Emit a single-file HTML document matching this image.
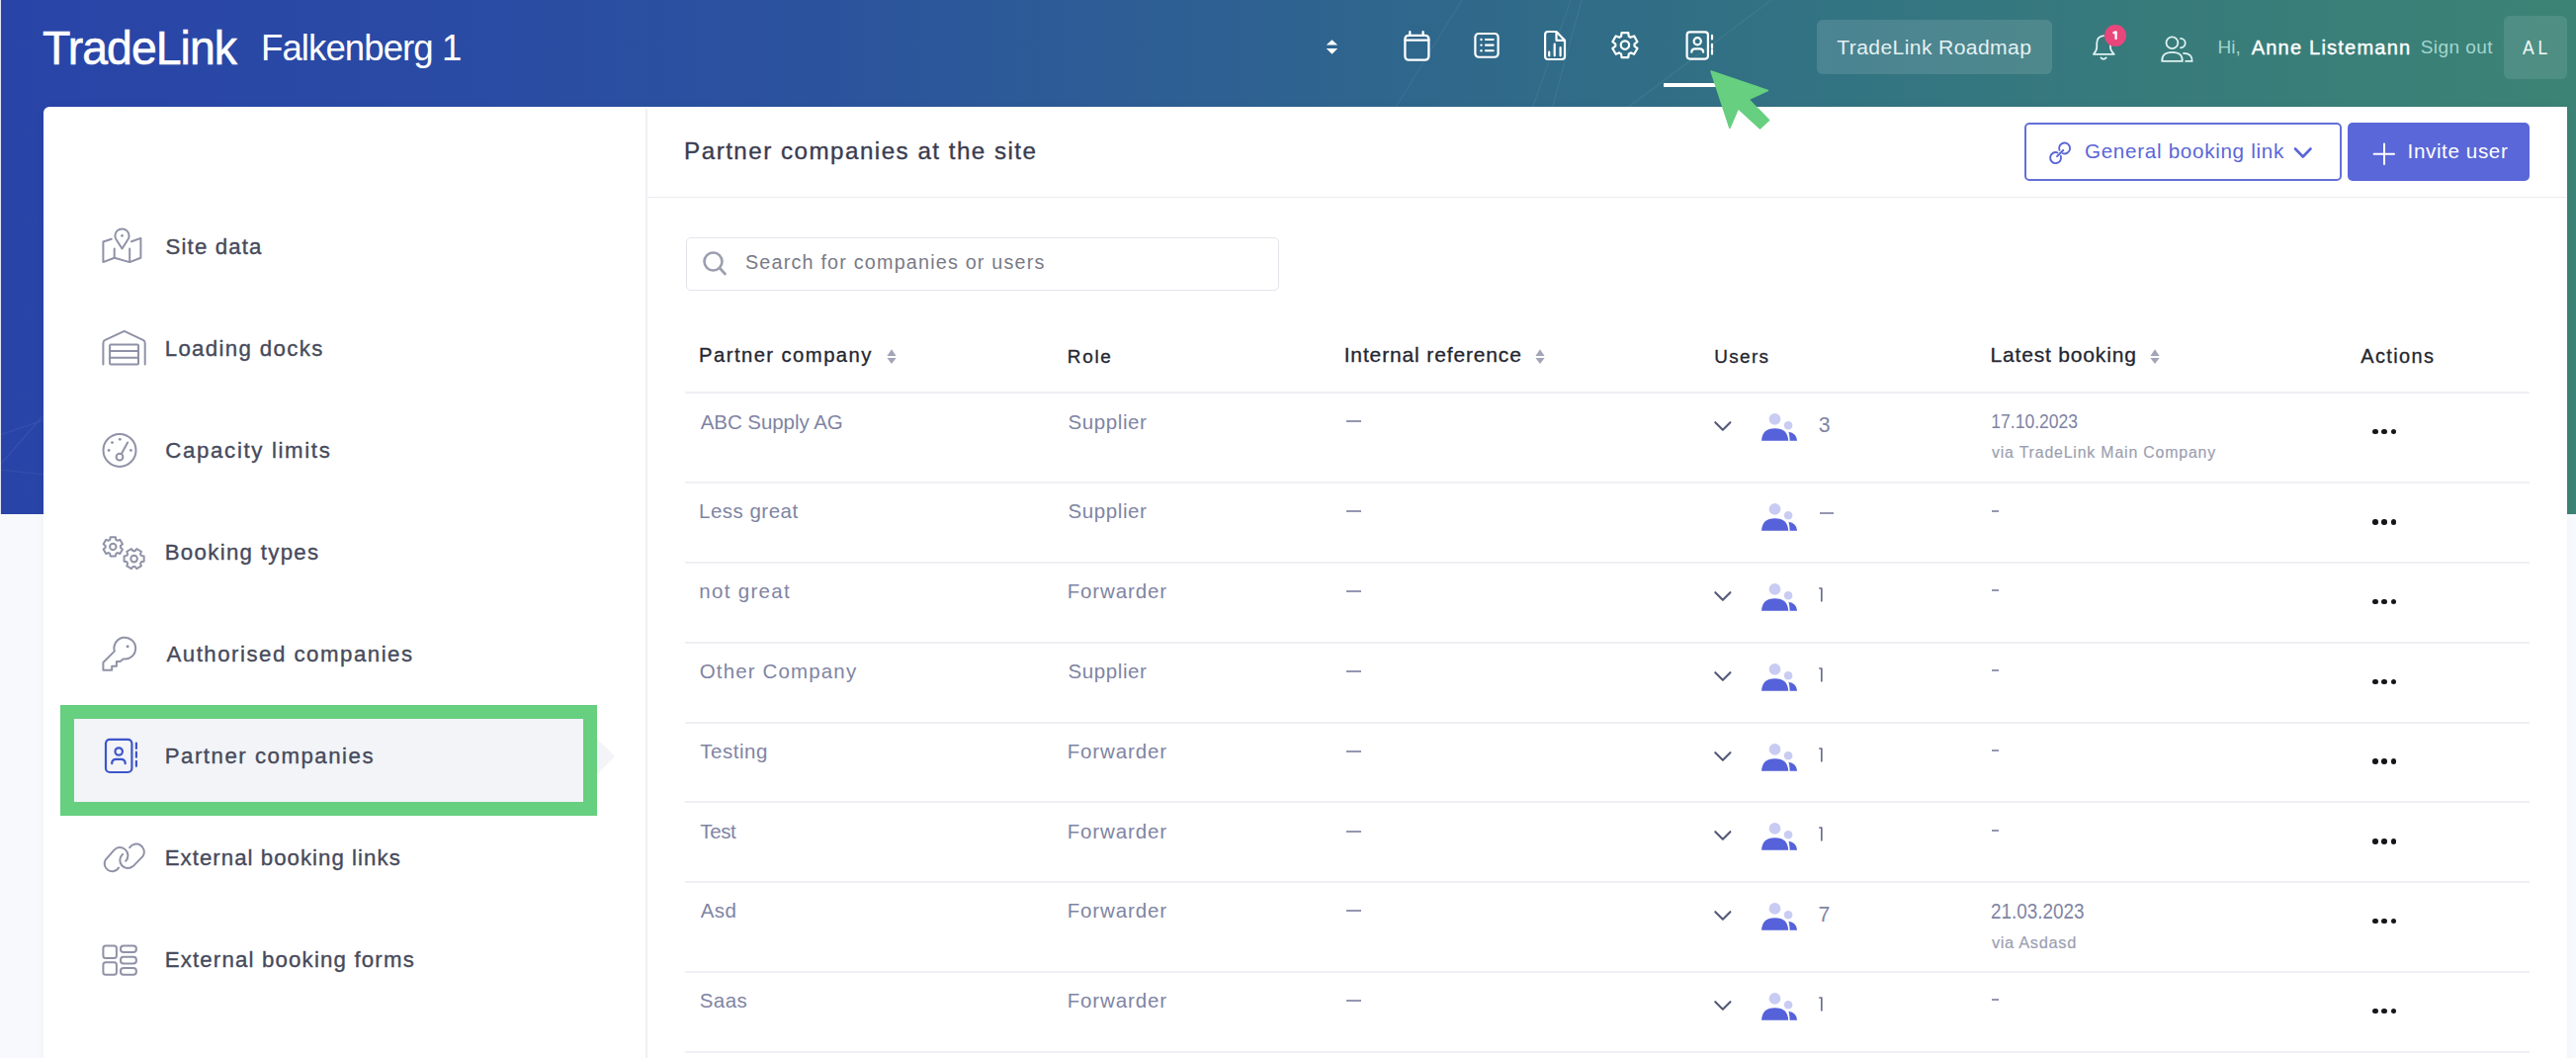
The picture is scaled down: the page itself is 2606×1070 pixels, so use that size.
<!DOCTYPE html>
<html><head><meta charset="utf-8"><style>*{margin:0;padding:0;box-sizing:border-box}
html,body{width:2606px;height:1070px;overflow:hidden;background:#f8f9fd;font-family:"Liberation Sans",sans-serif}
.a{position:absolute;white-space:nowrap;line-height:1}
svg{overflow:visible}
</style></head><body>
<div style="position:absolute;left:0px;top:0px;width:2606px;height:520px;background:linear-gradient(90deg,#2944a8 0%,#2a4ba4 18%,#2b539d 32%,#2e6192 48%,#306b88 60%,#337482 72%,#387b7b 84%,#3c8375 100%);"></div>
<div style="position:absolute;left:0px;top:0px;width:1px;height:520px;background:#dfe4f0;"></div>
<svg style="position:absolute;left:0px;top:0px;" width="2606" height="520" viewBox="0 0 2606 520" fill="none"><g stroke="#ffffff" stroke-width="1.2" opacity="0.06"><path d="M1479 0 L1411 110"/><path d="M1589 0 L1550 110"/><path d="M1600 0 L1570 110"/><path d="M1792 0 L1645 110"/><path d="M0 470 L44 420"/><path d="M0 440 L44 425"/><path d="M0 475 L44 480"/></g></svg>
<div class="a" style="left:42.9px;top:24.25px;font-size:48.84px;letter-spacing:-1.0px;color:#fff;-webkit-text-stroke:0.6px #fff;transform:scaleX(0.95);transform-origin:1.1px 0">TradeLink</div>
<div class="a" style="left:264.00px;top:30.59px;font-size:36.63px;letter-spacing:-0.946px;color:#ffffff;">Falkenberg 1</div>
<svg style="position:absolute;left:1335px;top:35px;" width="25" height="25" viewBox="0 0 25 25" fill="none"><path d="M6.8 10.6 L12.5 5.3 L18.2 10.6Z M6.8 14 L12.5 19.8 L18.2 14Z" fill="#fff"/></svg>
<svg style="position:absolute;left:1410px;top:25px;" width="45" height="45" viewBox="0 0 45 45" fill="none"><g stroke="#fff" stroke-width="2.3" stroke-linecap="round" stroke-linejoin="round"><rect x="11.4" y="10.9" width="24" height="24.7" rx="3.5"/><path d="M11.4 15.6 H35.4 M16.3 7.2 V10.9 M29.6 7.2 V10.9"/></g></svg>
<svg style="position:absolute;left:1485px;top:25px;" width="40" height="40" viewBox="0 0 40 40" fill="none"><g stroke="#fff" stroke-width="2.2" stroke-linecap="round"><rect x="7.4" y="9" width="23.2" height="23.75" rx="3.5"/><path d="M17.9 15 H25.7 M17.9 20.6 H25.7 M17.9 26.3 H25.7" stroke-width="2.1"/></g><g fill="#fff"><circle cx="13.5" cy="15" r="1.2"/><circle cx="13.5" cy="20.6" r="1.2"/><circle cx="13.5" cy="26.3" r="1.2"/></g></svg>
<svg style="position:absolute;left:1555px;top:25px;" width="40" height="40" viewBox="0 0 40 40" fill="none"><g stroke="#fff" stroke-width="2.2" stroke-linecap="round" stroke-linejoin="round"><path d="M19.5 7 H11 Q8.1 7 8.1 10 V32 Q8.1 35 11 35 H25 Q28 35 28 32 V15.8 Z M19.5 7 V15.8 H28"/><path d="M12.2 27.5 V31.3 M17.7 19.5 V31.3 M23.6 23.2 V31.3"/></g></svg>
<svg style="position:absolute;left:1615px;top:25px;" width="60" height="45" viewBox="0 0 60 45" fill="none"><g stroke="#fff" stroke-width="2.2" stroke-linejoin="round"><path d="M32.80 11.83 L32.26 8.04 L25.54 8.04 L25.00 11.83 L24.54 12.05 L24.10 12.29 L23.67 12.55 L23.26 12.83 L19.71 11.41 L16.34 17.24 L19.35 19.60 L19.31 20.10 L19.30 20.60 L19.31 21.10 L19.35 21.60 L16.34 23.96 L19.71 29.79 L23.26 28.37 L23.67 28.65 L24.10 28.91 L24.54 29.15 L25.00 29.37 L25.54 33.16 L32.26 33.16 L32.80 29.37 L33.26 29.15 L33.70 28.91 L34.13 28.65 L34.54 28.37 L38.09 29.79 L41.46 23.96 L38.45 21.60 L38.49 21.10 L38.50 20.60 L38.49 20.10 L38.45 19.60 L41.46 17.24 L38.09 11.41 L34.54 12.83 L34.13 12.55 L33.70 12.29 L33.26 12.05Z"/><circle cx="28.9" cy="20.6" r="4.2"/></g></svg>
<svg style="position:absolute;left:1695px;top:25px;" width="40" height="40" viewBox="0 0 40 40" fill="none"><g stroke="#fff" stroke-width="2.2" stroke-linecap="round"><rect x="11.6" y="7.4" width="21.3" height="27.2" rx="3"/><circle cx="22.2" cy="16.8" r="3.6"/><path d="M16.3 27.7 Q16.3 24.3 19.8 24.3 H24.6 Q28.1 24.3 28.1 27.7"/><path d="M37 10.8 V14.4 M37 19.8 V23.8 M37 25.8 V29.6"/></g></svg>
<div style="position:absolute;left:1683px;top:84px;width:72px;height:4px;background:#fff;"></div>
<div style="position:absolute;left:1838px;top:20px;width:238px;height:55px;background:rgba(255,255,255,0.12);border-radius:6px"></div>
<div class="a" style="left:1858.23px;top:37.26px;font-size:21.08px;letter-spacing:0.406px;color:#e4f1f2;">TradeLink Roadmap</div>
<svg style="position:absolute;left:2105px;top:20px;" width="40" height="45" viewBox="0 0 40 45" fill="none"><g stroke="#dff2f2" stroke-width="1.8" stroke-linecap="round" stroke-linejoin="round"><path d="M23 16.2 Q16.2 17 16.2 24 V28 Q16.2 31 12.9 34.8 H33.8 Q30 31 30 28 V24"/><path d="M20.4 38.4 Q23 41.2 25.7 38.4"/></g></svg>
<div style="position:absolute;left:2128.6px;top:25px;width:22.4px;height:22.4px;border-radius:50%;background:#e9467b"></div>
<svg style="position:absolute;left:2128px;top:25px;" width="24" height="24" viewBox="0 0 24 24" fill="none"><path d="M10.4 8.2 L12.6 7.4 V14.1" stroke="#fff" stroke-width="2.3" stroke-linecap="round" stroke-linejoin="round" fill="none"/></svg>
<svg style="position:absolute;left:2105px;top:20px;" width="130" height="50" viewBox="0 0 130 50" fill="none"><g stroke="#dff2f2" stroke-width="1.8" stroke-linecap="round"><circle cx="92.4" cy="23.2" r="5.9"/><path d="M82.3 41.9 Q81.6 32.8 92.5 32.8 Q103.4 32.8 102.7 41.9 Z"/><path d="M101 18.9 A4.5 4.5 0 1 1 101 28.3"/><path d="M104 33.8 Q112.9 33.8 112.6 41.9 H106.2"/></g></svg>
<div class="a" style="left:2243.44px;top:37.98px;font-size:19.04px;letter-spacing:0.001px;color:#a3d6cf;">Hi,</div>
<div class="a" style="left:2277.66px;top:37.52px;font-size:20.06px;letter-spacing:1.206px;color:#ffffff;-webkit-text-stroke:0.40px #ffffff;">Anne Listemann</div>
<div class="a" style="left:2448.64px;top:37.98px;font-size:19.04px;letter-spacing:0.448px;color:#a3d6cf;">Sign out</div>
<div style="position:absolute;left:2533px;top:16px;width:64px;height:64px;background:rgba(255,255,255,0.10);border-radius:6px"></div>
<div class="a" style="left:2552.46px;top:37.77px;font-size:20.35px;letter-spacing:0.000px;color:#f2fafa;transform:scaleX(0.8616);transform-origin:0.04px 0;">A L</div>
<div style="position:absolute;left:44px;top:108px;width:2553px;height:970px;background:#fff;border-radius:6px 0 0 0;box-shadow:0 0 10px rgba(40,40,80,0.035)"></div>
<div style="position:absolute;left:61px;top:713px;width:543px;height:112px;background:#66cf80;"></div>
<div style="position:absolute;left:75px;top:727px;width:515px;height:84px;background:#f2f4f8;"></div>
<svg style="position:absolute;left:600px;top:745px;" width="30" height="40" viewBox="0 0 30 40" fill="none"><path d="M4 2 L22 20 L4 38 Z" fill="#f2f4f8"/></svg>
<div class="a" style="left:167.49px;top:238.57px;font-size:22.24px;letter-spacing:1.154px;color:#464a5b;-webkit-text-stroke:0.35px #464a5b;">Site data</div>
<div class="a" style="left:166.68px;top:341.67px;font-size:22.24px;letter-spacing:1.359px;color:#464a5b;-webkit-text-stroke:0.35px #464a5b;">Loading docks</div>
<div class="a" style="left:167.37px;top:445.37px;font-size:22.24px;letter-spacing:1.649px;color:#464a5b;-webkit-text-stroke:0.35px #464a5b;">Capacity limits</div>
<div class="a" style="left:166.68px;top:548.07px;font-size:22.24px;letter-spacing:1.319px;color:#464a5b;-webkit-text-stroke:0.35px #464a5b;">Booking types</div>
<div class="a" style="left:168.46px;top:650.87px;font-size:22.24px;letter-spacing:1.506px;color:#464a5b;-webkit-text-stroke:0.35px #464a5b;">Authorised companies</div>
<div class="a" style="left:166.68px;top:754.27px;font-size:22.24px;letter-spacing:1.517px;color:#464a5b;-webkit-text-stroke:0.35px #464a5b;">Partner companies</div>
<div class="a" style="left:166.68px;top:856.67px;font-size:22.24px;letter-spacing:1.038px;color:#464a5b;-webkit-text-stroke:0.35px #464a5b;">External booking links</div>
<div class="a" style="left:166.68px;top:959.77px;font-size:22.24px;letter-spacing:1.176px;color:#464a5b;-webkit-text-stroke:0.35px #464a5b;">External booking forms</div>
<svg style="position:absolute;left:90px;top:220px;" width="60" height="55" viewBox="0 0 60 55" fill="none"><g stroke="#8f92a7" stroke-width="2" stroke-linecap="round" stroke-linejoin="round"><path d="M22.8 21.8 L14.4 24.5 V45.1 L25.7 40.8 L41.2 45.1 L52.4 40.8 V20.9 L43 24.3"/><path d="M25.7 31.5 V40.8 M41.2 31.5 V45.1"/><path d="M33.5 31.5 L28.2 23.2 A7.1 7.1 0 1 1 38.8 23.2 Z"/></g><circle cx="33.5" cy="18.4" r="1.3" fill="#8f92a7"/></svg>
<svg style="position:absolute;left:95px;top:325px;" width="60" height="55" viewBox="0 0 60 55" fill="none"><g stroke="#8f92a7" stroke-width="2" stroke-linecap="round" stroke-linejoin="round"><path d="M9.4 43.4 V22 Q9.4 19.8 11.4 18.9 L30.7 9.9 L49.7 18.9 Q51.7 19.8 51.7 22 V43.4"/><rect x="16.1" y="23.4" width="28.9" height="20" rx="1"/><path d="M16.1 29.9 H45 M16.1 36.7 H45"/></g></svg>
<svg style="position:absolute;left:95px;top:425px;" width="60" height="55" viewBox="0 0 60 55" fill="none"><g stroke="#8f92a7" stroke-width="2" stroke-linecap="round" stroke-linejoin="round"><circle cx="26" cy="30.4" r="16.5"/><circle cx="26" cy="37.2" r="3.4"/><path d="M28.1 33.5 L34.1 22.5"/></g><g fill="#8f92a7"><circle cx="15.1" cy="30.4" r="1.4"/><circle cx="18.5" cy="22.6" r="1.4"/><circle cx="26.3" cy="19.3" r="1.4"/><circle cx="37.4" cy="30.4" r="1.4"/></g></svg>
<svg style="position:absolute;left:95px;top:530px;" width="60" height="55" viewBox="0 0 60 55" fill="none"><g stroke="#8f92a7" stroke-width="2" stroke-linecap="round" stroke-linejoin="round"><path d="M22.39 15.96 L21.89 13.24 L16.71 13.24 L16.21 15.96 L15.85 16.13 L15.50 16.32 L15.16 16.53 L14.83 16.75 L12.23 15.83 L9.64 20.31 L11.74 22.11 L11.71 22.50 L11.70 22.90 L11.71 23.30 L11.74 23.69 L9.64 25.49 L12.23 29.97 L14.83 29.05 L15.16 29.27 L15.50 29.48 L15.85 29.67 L16.21 29.84 L16.71 32.56 L21.89 32.56 L22.39 29.84 L22.75 29.67 L23.10 29.48 L23.44 29.27 L23.77 29.05 L26.37 29.97 L28.96 25.49 L26.86 23.69 L26.89 23.30 L26.90 22.90 L26.89 22.50 L26.86 22.11 L28.96 20.31 L26.37 15.83 L23.77 16.75 L23.44 16.53 L23.10 16.32 L22.75 16.13Z"/><circle cx="19.3" cy="22.9" r="3.2"/><path d="M46.99 30.46 L47.95 27.75 L43.29 25.05 L41.43 27.24 L41.01 27.21 L40.60 27.20 L40.19 27.21 L39.77 27.24 L37.91 25.05 L33.25 27.75 L34.21 30.46 L33.97 30.80 L33.76 31.15 L33.56 31.51 L33.38 31.89 L30.55 32.41 L30.55 37.79 L33.38 38.31 L33.56 38.69 L33.76 39.05 L33.97 39.40 L34.21 39.74 L33.25 42.45 L37.91 45.15 L39.77 42.96 L40.19 42.99 L40.60 43.00 L41.01 42.99 L41.43 42.96 L43.29 45.15 L47.95 42.45 L46.99 39.74 L47.23 39.40 L47.44 39.05 L47.64 38.69 L47.82 38.31 L50.65 37.79 L50.65 32.41 L47.82 31.89 L47.64 31.51 L47.44 31.15 L47.23 30.80Z"/><circle cx="40.6" cy="35.1" r="3.3"/></g></svg>
<svg style="position:absolute;left:95px;top:630px;" width="60" height="55" viewBox="0 0 60 55" fill="none"><g stroke="#8f92a7" stroke-width="2" stroke-linecap="round" stroke-linejoin="round"><path d="M20.8 28.6 L9.4 40 V47.8 H18.2 V43.7 H22.9 V39 H26.5 L29.6 36.4 A10.9 10.9 0 1 0 20.8 28.6 Z"/></g><circle cx="34.1" cy="23.7" r="1.5" fill="#8f92a7"/></svg>
<svg style="position:absolute;left:95px;top:735px;" width="60" height="55" viewBox="0 0 60 55" fill="none"><g stroke="#3d55c9" stroke-width="2.2" stroke-linecap="round"><rect x="12" y="12.8" width="26.4" height="33.2" rx="4"/><circle cx="25.2" cy="25" r="3.7"/><path d="M18.2 37.2 Q18.2 32.8 22.5 32.8 H27.4 Q31.7 32.8 31.7 37.2"/><path d="M42.9 16.6 V21.9 M42.9 25.7 V30.7 M42.9 34.8 V39.8"/></g></svg>
<svg style="position:absolute;left:95px;top:840px;" width="60" height="55" viewBox="0 0 60 55" fill="none"><g stroke="#8f92a7" stroke-width="2" stroke-linecap="round" stroke-linejoin="round"><path d="M25 37.6 A7.6 7.6 0 1 1 11.9 29.3 L20.5 19.6 A7.6 7.6 0 1 1 32.2 30.8"/><path d="M36.1 17.2 A7.8 7.8 0 1 1 49.6 25.9 L39.6 36.1 A7.8 7.8 0 1 1 29.1 23.9"/></g></svg>
<svg style="position:absolute;left:95px;top:940px;" width="60" height="55" viewBox="0 0 60 55" fill="none"><g stroke="#8f92a7" stroke-width="2" stroke-linecap="round" stroke-linejoin="round"><rect x="9.4" y="16.6" width="13.5" height="12.3" rx="2.5"/><rect x="9.4" y="33.3" width="13.5" height="12.5" rx="2.5"/><rect x="27" y="16.6" width="15.9" height="6.5" rx="3"/><rect x="27" y="27.8" width="15.9" height="6.8" rx="3"/><rect x="27" y="39" width="15.9" height="6.8" rx="3"/></g></svg>
<div style="position:absolute;left:653px;top:110px;width:2px;height:960px;background:#eff0f3;"></div>
<div style="position:absolute;left:655px;top:199px;width:1942px;height:1px;background:#ecedf1;"></div>
<div class="a" style="left:692.11px;top:140.91px;font-size:24.20px;letter-spacing:1.475px;color:#3a3c4f;-webkit-text-stroke:0.35px #3a3c4f;">Partner companies at the site</div>
<div style="position:absolute;left:2048px;top:124px;width:321px;height:59px;background:#fff;border:2px solid #6470d6;border-radius:5px"></div>
<svg style="position:absolute;left:2060px;top:130px;" width="40" height="40" viewBox="0 0 40 40" fill="none"><g stroke="#5a66d6" stroke-width="1.9" stroke-linecap="round" fill="none"><path d="M23.43 21.88 A5.5 5.5 0 1 1 26.72 25.17"/><path d="M24.77 27.72 A5.5 5.5 0 1 1 21.48 24.43"/><path d="M21 28.2 L27.2 22"/></g></svg>
<div class="a" style="left:2108.96px;top:142.62px;font-size:20.64px;letter-spacing:0.697px;color:#5a66d6;">General booking link</div>
<svg style="position:absolute;left:2315px;top:140px;" width="30" height="30" viewBox="0 0 30 30" fill="none"><path d="M7 10.5 L14.75 18.5 L22.5 10.5" stroke="#5a66d6" stroke-width="2.6" stroke-linecap="round" stroke-linejoin="round"/></svg>
<div style="position:absolute;left:2375px;top:124px;width:184px;height:59px;background:#5a67d8;border-radius:5px"></div>
<svg style="position:absolute;left:2395px;top:140px;" width="35" height="30" viewBox="0 0 35 30" fill="none"><path d="M17 5.5 V25.9 M6.6 15.7 H27" stroke="#fff" stroke-width="2" stroke-linecap="round"/></svg>
<div class="a" style="left:2435.60px;top:142.62px;font-size:20.64px;letter-spacing:0.603px;color:#ffffff;">Invite user</div>
<div style="position:absolute;left:693.5px;top:239.5px;width:600px;height:54.5px;background:#fff;border:1.5px solid #e3e4ea;border-radius:5px"></div>
<svg style="position:absolute;left:700px;top:245px;" width="45" height="45" viewBox="0 0 45 45" fill="none"><g stroke="#9c9eb0" stroke-width="2.6" stroke-linecap="round"><circle cx="21.5" cy="19.5" r="9"/><path d="M28 26 L33.5 32"/></g></svg>
<div class="a" style="left:754.00px;top:255.96px;font-size:19.77px;letter-spacing:1.187px;color:#797a86;">Search for companies or users</div>
<div class="a" style="left:707.09px;top:349.08px;font-size:20.28px;letter-spacing:1.425px;color:#24262f;-webkit-text-stroke:0.30px #24262f;">Partner company</div>
<div class="a" style="left:1079.85px;top:352.00px;font-size:18.90px;letter-spacing:1.710px;color:#24262f;-webkit-text-stroke:0.30px #24262f;">Role</div>
<div class="a" style="left:1359.66px;top:348.47px;font-size:21.00px;letter-spacing:0.862px;color:#24262f;-webkit-text-stroke:0.30px #24262f;">Internal reference</div>
<div class="a" style="left:1734.24px;top:352.00px;font-size:18.90px;letter-spacing:1.375px;color:#24262f;-webkit-text-stroke:0.30px #24262f;">Users</div>
<div class="a" style="left:2013.48px;top:348.47px;font-size:21.00px;letter-spacing:0.827px;color:#24262f;-webkit-text-stroke:0.30px #24262f;">Latest booking</div>
<div class="a" style="left:2388.26px;top:351.04px;font-size:19.91px;letter-spacing:1.393px;color:#24262f;-webkit-text-stroke:0.30px #24262f;">Actions</div>
<svg style="position:absolute;left:896.5px;top:354px;" width="12" height="16" viewBox="0 0 12 16" fill="none"><path d="M0.4 5.9 L5 -0.8 L9.6 5.9Z M0.4 8 L9.6 8 L5 14Z" fill="#a4a4b9"/></svg>
<svg style="position:absolute;left:1553px;top:354px;" width="12" height="16" viewBox="0 0 12 16" fill="none"><path d="M0.4 5.9 L5 -0.8 L9.6 5.9Z M0.4 8 L9.6 8 L5 14Z" fill="#a4a4b9"/></svg>
<svg style="position:absolute;left:2175px;top:354px;" width="12" height="16" viewBox="0 0 12 16" fill="none"><path d="M0.4 5.9 L5 -0.8 L9.6 5.9Z M0.4 8 L9.6 8 L5 14Z" fill="#a4a4b9"/></svg>
<div style="position:absolute;left:693px;top:396px;width:1866px;height:2px;background:#eff0f3;"></div>
<div style="position:absolute;left:693px;top:487px;width:1866px;height:2px;background:#eff0f3;"></div>
<div style="position:absolute;left:693px;top:568px;width:1866px;height:2px;background:#eff0f3;"></div>
<div style="position:absolute;left:693px;top:649px;width:1866px;height:2px;background:#eff0f3;"></div>
<div style="position:absolute;left:693px;top:730px;width:1866px;height:2px;background:#eff0f3;"></div>
<div style="position:absolute;left:693px;top:810px;width:1866px;height:2px;background:#eff0f3;"></div>
<div style="position:absolute;left:693px;top:891px;width:1866px;height:2px;background:#eff0f3;"></div>
<div style="position:absolute;left:693px;top:982px;width:1866px;height:2px;background:#eff0f3;"></div>
<div style="position:absolute;left:693px;top:1063px;width:1866px;height:2px;background:#eff0f3;"></div>
<div class="a" style="left:708.66px;top:416.65px;font-size:20.49px;letter-spacing:-0.044px;color:#8084a3;">ABC Supply AG</div>
<div class="a" style="left:1080.47px;top:416.65px;font-size:20.49px;letter-spacing:0.611px;color:#8084a3;">Supplier</div>
<div style="position:absolute;left:1362px;top:425px;width:15px;height:2px;background:#9497b0;"></div>
<svg style="position:absolute;left:1730px;top:420.6px;" width="25" height="16" viewBox="0 0 25 16" fill="none"><path d="M5.3 6.2 L12.85 13.8 L20.4 6.2" stroke="#555a78" stroke-width="2.1" stroke-linecap="round" stroke-linejoin="round"/></svg>
<svg style="position:absolute;left:1778px;top:417.6px;" width="45" height="32" viewBox="0 0 45 32" fill="none"><circle cx="17.5" cy="5.9" r="5.9" fill="#c9ccf2"/><circle cx="31.1" cy="12.2" r="4.3" fill="#c9ccf2"/><path d="M31.4 18.7 Q39.6 20 40.1 27.7 H32.6 Q32.4 21.5 31.4 18.7Z" fill="#5562d9"/><path d="M4.1 27.7 Q4.6 15.3 17.6 15.3 Q30.6 15.3 31.1 27.7 Z" fill="#5562d9"/></svg>
<div class="a" style="left:1839.69px;top:419.03px;font-size:21.22px;letter-spacing:0.000px;color:#8084a3;">3</div>
<div class="a" style="left:2013.53px;top:416.32px;font-size:20.64px;letter-spacing:0.000px;color:#8084a3;transform:scaleX(0.8510);transform-origin:1.57px 0;">17.10.2023</div>
<div class="a" style="left:2014.95px;top:449.89px;font-size:15.84px;letter-spacing:0.849px;color:#9c9fb2;-webkit-text-stroke:0.20px #9c9fb2;">via TradeLink Main Company</div>
<div style="position:absolute;left:2400.2px;top:433.5px;width:5.6px;height:5.6px;border-radius:50%;background:#16161a"></div>
<div style="position:absolute;left:2409.3px;top:433.5px;width:5.6px;height:5.6px;border-radius:50%;background:#16161a"></div>
<div style="position:absolute;left:2418.5px;top:433.5px;width:5.6px;height:5.6px;border-radius:50%;background:#16161a"></div>
<div class="a" style="left:707.02px;top:507.45px;font-size:20.49px;letter-spacing:0.493px;color:#8084a3;">Less great</div>
<div class="a" style="left:1080.47px;top:507.45px;font-size:20.49px;letter-spacing:0.611px;color:#8084a3;">Supplier</div>
<div style="position:absolute;left:1362px;top:516px;width:15px;height:2px;background:#9497b0;"></div>
<svg style="position:absolute;left:1778px;top:509.1px;" width="45" height="32" viewBox="0 0 45 32" fill="none"><circle cx="17.5" cy="5.9" r="5.9" fill="#c9ccf2"/><circle cx="31.1" cy="12.2" r="4.3" fill="#c9ccf2"/><path d="M31.4 18.7 Q39.6 20 40.1 27.7 H32.6 Q32.4 21.5 31.4 18.7Z" fill="#5562d9"/><path d="M4.1 27.7 Q4.6 15.3 17.6 15.3 Q30.6 15.3 31.1 27.7 Z" fill="#5562d9"/></svg>
<div style="position:absolute;left:1841px;top:518px;width:14px;height:2px;background:#9497b0;"></div>
<div style="position:absolute;left:2014.5px;top:516px;width:7.5px;height:2px;background:#9497b0;"></div>
<div style="position:absolute;left:2400.2px;top:525.0px;width:5.6px;height:5.6px;border-radius:50%;background:#16161a"></div>
<div style="position:absolute;left:2409.3px;top:525.0px;width:5.6px;height:5.6px;border-radius:50%;background:#16161a"></div>
<div style="position:absolute;left:2418.5px;top:525.0px;width:5.6px;height:5.6px;border-radius:50%;background:#16161a"></div>
<div class="a" style="left:707.34px;top:588.05px;font-size:20.49px;letter-spacing:1.302px;color:#8084a3;">not great</div>
<div class="a" style="left:1079.72px;top:588.05px;font-size:20.49px;letter-spacing:0.867px;color:#8084a3;">Forwarder</div>
<div style="position:absolute;left:1362px;top:597px;width:15px;height:2px;background:#9497b0;"></div>
<svg style="position:absolute;left:1730px;top:592.7px;" width="25" height="16" viewBox="0 0 25 16" fill="none"><path d="M5.3 6.2 L12.85 13.8 L20.4 6.2" stroke="#555a78" stroke-width="2.1" stroke-linecap="round" stroke-linejoin="round"/></svg>
<svg style="position:absolute;left:1778px;top:589.7px;" width="45" height="32" viewBox="0 0 45 32" fill="none"><circle cx="17.5" cy="5.9" r="5.9" fill="#c9ccf2"/><circle cx="31.1" cy="12.2" r="4.3" fill="#c9ccf2"/><path d="M31.4 18.7 Q39.6 20 40.1 27.7 H32.6 Q32.4 21.5 31.4 18.7Z" fill="#5562d9"/><path d="M4.1 27.7 Q4.6 15.3 17.6 15.3 Q30.6 15.3 31.1 27.7 Z" fill="#5562d9"/></svg>
<svg style="position:absolute;left:1835px;top:588.7px;" width="16" height="24" viewBox="0 0 16 24" fill="none"><path d="M5.2 6 H7.8 V19.5" stroke="#6a6e8c" stroke-width="1.7" stroke-linejoin="round" fill="none"/></svg>
<div style="position:absolute;left:2014.5px;top:596px;width:7.5px;height:2px;background:#9497b0;"></div>
<div style="position:absolute;left:2400.2px;top:605.6px;width:5.6px;height:5.6px;border-radius:50%;background:#16161a"></div>
<div style="position:absolute;left:2409.3px;top:605.6px;width:5.6px;height:5.6px;border-radius:50%;background:#16161a"></div>
<div style="position:absolute;left:2418.5px;top:605.6px;width:5.6px;height:5.6px;border-radius:50%;background:#16161a"></div>
<div class="a" style="left:707.73px;top:669.25px;font-size:20.49px;letter-spacing:1.154px;color:#8084a3;">Other Company</div>
<div class="a" style="left:1080.47px;top:669.25px;font-size:20.49px;letter-spacing:0.611px;color:#8084a3;">Supplier</div>
<div style="position:absolute;left:1362px;top:678px;width:15px;height:2px;background:#9497b0;"></div>
<svg style="position:absolute;left:1730px;top:673.9px;" width="25" height="16" viewBox="0 0 25 16" fill="none"><path d="M5.3 6.2 L12.85 13.8 L20.4 6.2" stroke="#555a78" stroke-width="2.1" stroke-linecap="round" stroke-linejoin="round"/></svg>
<svg style="position:absolute;left:1778px;top:670.9px;" width="45" height="32" viewBox="0 0 45 32" fill="none"><circle cx="17.5" cy="5.9" r="5.9" fill="#c9ccf2"/><circle cx="31.1" cy="12.2" r="4.3" fill="#c9ccf2"/><path d="M31.4 18.7 Q39.6 20 40.1 27.7 H32.6 Q32.4 21.5 31.4 18.7Z" fill="#5562d9"/><path d="M4.1 27.7 Q4.6 15.3 17.6 15.3 Q30.6 15.3 31.1 27.7 Z" fill="#5562d9"/></svg>
<svg style="position:absolute;left:1835px;top:669.9px;" width="16" height="24" viewBox="0 0 16 24" fill="none"><path d="M5.2 6 H7.8 V19.5" stroke="#6a6e8c" stroke-width="1.7" stroke-linejoin="round" fill="none"/></svg>
<div style="position:absolute;left:2014.5px;top:677px;width:7.5px;height:2px;background:#9497b0;"></div>
<div style="position:absolute;left:2400.2px;top:686.8px;width:5.6px;height:5.6px;border-radius:50%;background:#16161a"></div>
<div style="position:absolute;left:2409.3px;top:686.8px;width:5.6px;height:5.6px;border-radius:50%;background:#16161a"></div>
<div style="position:absolute;left:2418.5px;top:686.8px;width:5.6px;height:5.6px;border-radius:50%;background:#16161a"></div>
<div class="a" style="left:708.24px;top:749.85px;font-size:20.49px;letter-spacing:0.546px;color:#8084a3;">Testing</div>
<div class="a" style="left:1079.72px;top:749.85px;font-size:20.49px;letter-spacing:0.867px;color:#8084a3;">Forwarder</div>
<div style="position:absolute;left:1362px;top:759px;width:15px;height:2px;background:#9497b0;"></div>
<svg style="position:absolute;left:1730px;top:754.5px;" width="25" height="16" viewBox="0 0 25 16" fill="none"><path d="M5.3 6.2 L12.85 13.8 L20.4 6.2" stroke="#555a78" stroke-width="2.1" stroke-linecap="round" stroke-linejoin="round"/></svg>
<svg style="position:absolute;left:1778px;top:751.5px;" width="45" height="32" viewBox="0 0 45 32" fill="none"><circle cx="17.5" cy="5.9" r="5.9" fill="#c9ccf2"/><circle cx="31.1" cy="12.2" r="4.3" fill="#c9ccf2"/><path d="M31.4 18.7 Q39.6 20 40.1 27.7 H32.6 Q32.4 21.5 31.4 18.7Z" fill="#5562d9"/><path d="M4.1 27.7 Q4.6 15.3 17.6 15.3 Q30.6 15.3 31.1 27.7 Z" fill="#5562d9"/></svg>
<svg style="position:absolute;left:1835px;top:750.5px;" width="16" height="24" viewBox="0 0 16 24" fill="none"><path d="M5.2 6 H7.8 V19.5" stroke="#6a6e8c" stroke-width="1.7" stroke-linejoin="round" fill="none"/></svg>
<div style="position:absolute;left:2014.5px;top:758px;width:7.5px;height:2px;background:#9497b0;"></div>
<div style="position:absolute;left:2400.2px;top:767.4px;width:5.6px;height:5.6px;border-radius:50%;background:#16161a"></div>
<div style="position:absolute;left:2409.3px;top:767.4px;width:5.6px;height:5.6px;border-radius:50%;background:#16161a"></div>
<div style="position:absolute;left:2418.5px;top:767.4px;width:5.6px;height:5.6px;border-radius:50%;background:#16161a"></div>
<div class="a" style="left:708.24px;top:830.65px;font-size:20.49px;letter-spacing:-0.349px;color:#8084a3;">Test</div>
<div class="a" style="left:1079.72px;top:830.65px;font-size:20.49px;letter-spacing:0.867px;color:#8084a3;">Forwarder</div>
<div style="position:absolute;left:1362px;top:840px;width:15px;height:2px;background:#9497b0;"></div>
<svg style="position:absolute;left:1730px;top:835.3px;" width="25" height="16" viewBox="0 0 25 16" fill="none"><path d="M5.3 6.2 L12.85 13.8 L20.4 6.2" stroke="#555a78" stroke-width="2.1" stroke-linecap="round" stroke-linejoin="round"/></svg>
<svg style="position:absolute;left:1778px;top:832.3px;" width="45" height="32" viewBox="0 0 45 32" fill="none"><circle cx="17.5" cy="5.9" r="5.9" fill="#c9ccf2"/><circle cx="31.1" cy="12.2" r="4.3" fill="#c9ccf2"/><path d="M31.4 18.7 Q39.6 20 40.1 27.7 H32.6 Q32.4 21.5 31.4 18.7Z" fill="#5562d9"/><path d="M4.1 27.7 Q4.6 15.3 17.6 15.3 Q30.6 15.3 31.1 27.7 Z" fill="#5562d9"/></svg>
<svg style="position:absolute;left:1835px;top:831.3px;" width="16" height="24" viewBox="0 0 16 24" fill="none"><path d="M5.2 6 H7.8 V19.5" stroke="#6a6e8c" stroke-width="1.7" stroke-linejoin="round" fill="none"/></svg>
<div style="position:absolute;left:2014.5px;top:839px;width:7.5px;height:2px;background:#9497b0;"></div>
<div style="position:absolute;left:2400.2px;top:848.2px;width:5.6px;height:5.6px;border-radius:50%;background:#16161a"></div>
<div style="position:absolute;left:2409.3px;top:848.2px;width:5.6px;height:5.6px;border-radius:50%;background:#16161a"></div>
<div style="position:absolute;left:2418.5px;top:848.2px;width:5.6px;height:5.6px;border-radius:50%;background:#16161a"></div>
<div class="a" style="left:708.66px;top:911.25px;font-size:20.49px;letter-spacing:0.523px;color:#8084a3;">Asd</div>
<div class="a" style="left:1079.72px;top:911.25px;font-size:20.49px;letter-spacing:0.867px;color:#8084a3;">Forwarder</div>
<div style="position:absolute;left:1362px;top:920px;width:15px;height:2px;background:#9497b0;"></div>
<svg style="position:absolute;left:1730px;top:915.9px;" width="25" height="16" viewBox="0 0 25 16" fill="none"><path d="M5.3 6.2 L12.85 13.8 L20.4 6.2" stroke="#555a78" stroke-width="2.1" stroke-linecap="round" stroke-linejoin="round"/></svg>
<svg style="position:absolute;left:1778px;top:912.9px;" width="45" height="32" viewBox="0 0 45 32" fill="none"><circle cx="17.5" cy="5.9" r="5.9" fill="#c9ccf2"/><circle cx="31.1" cy="12.2" r="4.3" fill="#c9ccf2"/><path d="M31.4 18.7 Q39.6 20 40.1 27.7 H32.6 Q32.4 21.5 31.4 18.7Z" fill="#5562d9"/><path d="M4.1 27.7 Q4.6 15.3 17.6 15.3 Q30.6 15.3 31.1 27.7 Z" fill="#5562d9"/></svg>
<div class="a" style="left:1839.41px;top:914.33px;font-size:21.22px;letter-spacing:0.000px;color:#8084a3;">7</div>
<div class="a" style="left:2014.03px;top:910.83px;font-size:21.22px;letter-spacing:0.000px;color:#8084a3;transform:scaleX(0.8896);transform-origin:1.07px 0;">21.03.2023</div>
<div class="a" style="left:2014.94px;top:944.69px;font-size:16.42px;letter-spacing:0.664px;color:#9c9fb2;-webkit-text-stroke:0.20px #9c9fb2;">via Asdasd</div>
<div style="position:absolute;left:2400.2px;top:928.8px;width:5.6px;height:5.6px;border-radius:50%;background:#16161a"></div>
<div style="position:absolute;left:2409.3px;top:928.8px;width:5.6px;height:5.6px;border-radius:50%;background:#16161a"></div>
<div style="position:absolute;left:2418.5px;top:928.8px;width:5.6px;height:5.6px;border-radius:50%;background:#16161a"></div>
<div class="a" style="left:707.77px;top:1002.15px;font-size:20.49px;letter-spacing:0.420px;color:#8084a3;">Saas</div>
<div class="a" style="left:1079.72px;top:1002.15px;font-size:20.49px;letter-spacing:0.867px;color:#8084a3;">Forwarder</div>
<div style="position:absolute;left:1362px;top:1011px;width:15px;height:2px;background:#9497b0;"></div>
<svg style="position:absolute;left:1730px;top:1006.8px;" width="25" height="16" viewBox="0 0 25 16" fill="none"><path d="M5.3 6.2 L12.85 13.8 L20.4 6.2" stroke="#555a78" stroke-width="2.1" stroke-linecap="round" stroke-linejoin="round"/></svg>
<svg style="position:absolute;left:1778px;top:1003.8px;" width="45" height="32" viewBox="0 0 45 32" fill="none"><circle cx="17.5" cy="5.9" r="5.9" fill="#c9ccf2"/><circle cx="31.1" cy="12.2" r="4.3" fill="#c9ccf2"/><path d="M31.4 18.7 Q39.6 20 40.1 27.7 H32.6 Q32.4 21.5 31.4 18.7Z" fill="#5562d9"/><path d="M4.1 27.7 Q4.6 15.3 17.6 15.3 Q30.6 15.3 31.1 27.7 Z" fill="#5562d9"/></svg>
<svg style="position:absolute;left:1835px;top:1002.8px;" width="16" height="24" viewBox="0 0 16 24" fill="none"><path d="M5.2 6 H7.8 V19.5" stroke="#6a6e8c" stroke-width="1.7" stroke-linejoin="round" fill="none"/></svg>
<div style="position:absolute;left:2014.5px;top:1010px;width:7.5px;height:2px;background:#9497b0;"></div>
<div style="position:absolute;left:2400.2px;top:1019.7px;width:5.6px;height:5.6px;border-radius:50%;background:#16161a"></div>
<div style="position:absolute;left:2409.3px;top:1019.7px;width:5.6px;height:5.6px;border-radius:50%;background:#16161a"></div>
<div style="position:absolute;left:2418.5px;top:1019.7px;width:5.6px;height:5.6px;border-radius:50%;background:#16161a"></div>
<svg style="position:absolute;left:1700px;top:60px;" width="100" height="80" viewBox="0 0 100 80" fill="none"><path d="M31 12 L88.4 31.5 L69 40.5 L89.6 61.5 L80.5 70 L58.4 49.6 L49.9 69.5 Z" fill="#66cf80" stroke="#66cf80" stroke-width="1.5" stroke-linejoin="round"/></svg>
</body></html>
